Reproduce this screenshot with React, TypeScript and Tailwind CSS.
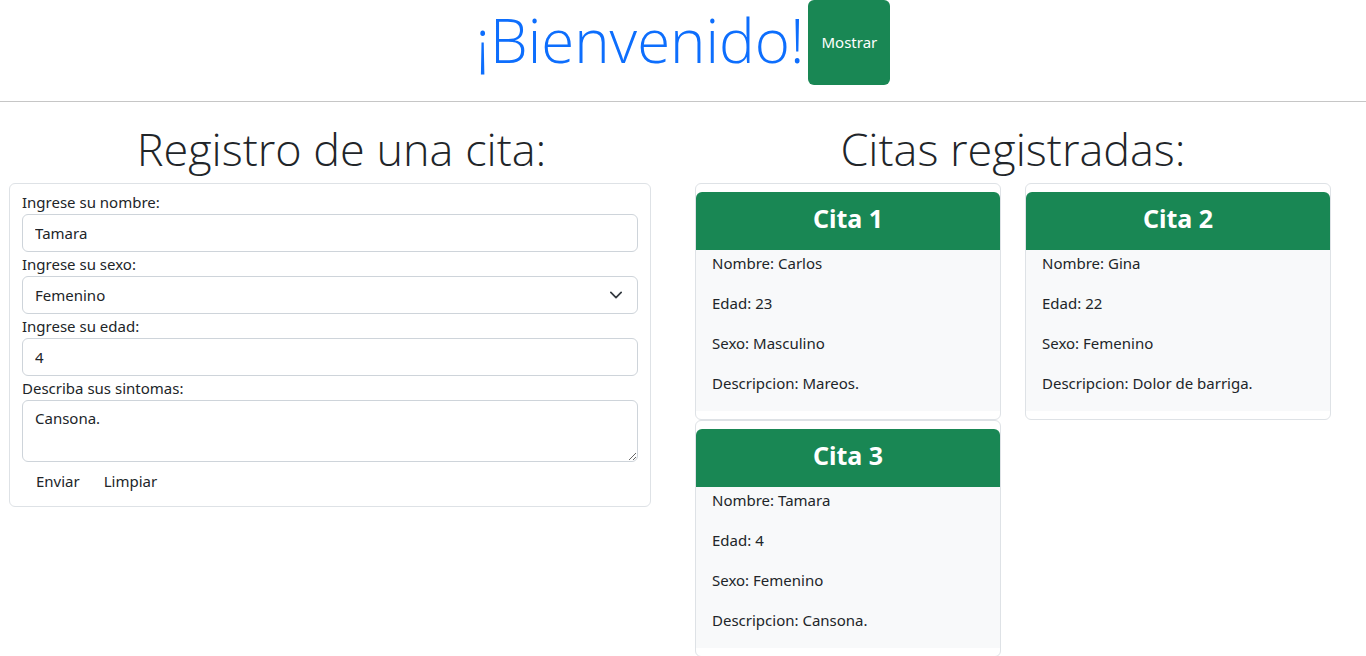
import React from "react";

interface Cita {
    id: number;
    nombre: string;
    edad: number;
    sexo: string;
    descripcion: string;
}

const citas: Cita[] = [
    { id: 1, nombre: "Carlos", edad: 23, sexo: "Masculino", descripcion: "Mareos." },
    { id: 2, nombre: "Gina", edad: 22, sexo: "Femenino", descripcion: "Dolor de barriga." },
    { id: 3, nombre: "Tamara", edad: 4, sexo: "Femenino", descripcion: "Cansona." },
];

const body = "font-['Noto_Sans',sans-serif] text-[15px] text-[#212529]";
const light = "font-['Open_Sans',sans-serif] font-light";

const CitaCard: React.FC<{ cita: Cita }> = ({ cita }) => (
    <div className="w-[306px] border border-[#dee2e6] rounded-[6px] py-2 bg-white">
        <div className="h-[58px] bg-[#198754] rounded-t-[6px] flex items-center justify-center">
            <h3 className="text-white text-[25px] font-bold font-['Noto_Sans',sans-serif] -mt-[5px]">Cita {cita.id}</h3>
        </div>
        <div className="bg-[#f8f9fa] px-4 pt-[1px]">
            <p className="leading-6 pb-4">Nombre: {cita.nombre}</p>
            <p className="leading-6 pb-4">Edad: {cita.edad}</p>
            <p className="leading-6 pb-4">Sexo: {cita.sexo}</p>
            <p className="leading-6 pb-4">Descripcion: {cita.descripcion}</p>
        </div>
    </div>
);

const App: React.FC = () => {
    const field = "w-full h-[38px] border border-[#ced4da] rounded-[6px] px-3 bg-white outline-none";

    return (
        <div className={`${body} bg-white min-h-screen`}>
            <header className="flex justify-center items-start h-[85px]">
                <h1 className={`${light} text-[#0d6efd] text-[60px] leading-none pt-[10px]`}>¡Bienvenido!</h1>
                <button className="ml-[4px] w-[82px] h-[85px] bg-[#198754] text-white rounded-[6px]">Mostrar</button>
            </header>
            <hr className="mt-4 border-0 border-t border-[#c6c6c6]" />

            <main className="flex">
                <section className="w-[683px] shrink-0">
                    <h2 className={`${light} text-center text-[45px] leading-[81px] h-[81px] pt-[6px] px-[12px]`}>
                        Registro de una cita:
                    </h2>
                    <form className="ml-[9px] w-[642px] border border-[#dee2e6] rounded-[6px] px-3 pt-[6px] pb-[6px]">
                        <label className="block leading-6">Ingrese su nombre:</label>
                        <input className={field} defaultValue="Tamara" />
                        <label className="block leading-6">Ingrese su sexo:</label>
                        <div className="relative">
                            <select className={`${field} appearance-none`} defaultValue="Femenino">
                                <option>Masculino</option>
                                <option>Femenino</option>
                            </select>
                            <svg
                                className="absolute right-[16px] top-[15px] pointer-events-none"
                                width="12"
                                height="8"
                                viewBox="1 4 14 8"
                                fill="none"
                                stroke="#343a40"
                                strokeWidth="2"
                                strokeLinecap="round"
                                strokeLinejoin="round"
                            >
                                <path d="m2 5 6 6 6-6" />
                            </svg>
                        </div>
                        <label className="block leading-6">Ingrese su edad:</label>
                        <input className={field} defaultValue="4" />
                        <label className="block leading-6">Describa sus sintomas:</label>
                        <textarea
                            className="block w-full h-[62px] border border-[#ced4da] rounded-[6px] px-3 py-[6px] outline-none"
                            defaultValue="Cansona."
                        />
                        <div className="flex ml-[2px]">
                            <button type="button" className="h-[38px] px-3">Enviar</button>
                            <button type="button" className="h-[38px] px-3">Limpiar</button>
                        </div>
                    </form>
                </section>

                <section className="pl-[12px]">
                    <div className="w-[636px]">
                        <h2 className={`${light} text-center text-[45px] leading-[81px] h-[81px] pt-[6px]`}>Citas registradas:</h2>
                        <div className="flex flex-wrap gap-x-[24px] gap-y-0">
                            {citas.map((c) => (
                                <CitaCard key={c.id} cita={c} />
                            ))}
                        </div>
                    </div>
                </section>
            </main>
        </div>
    );
};

export default App;
